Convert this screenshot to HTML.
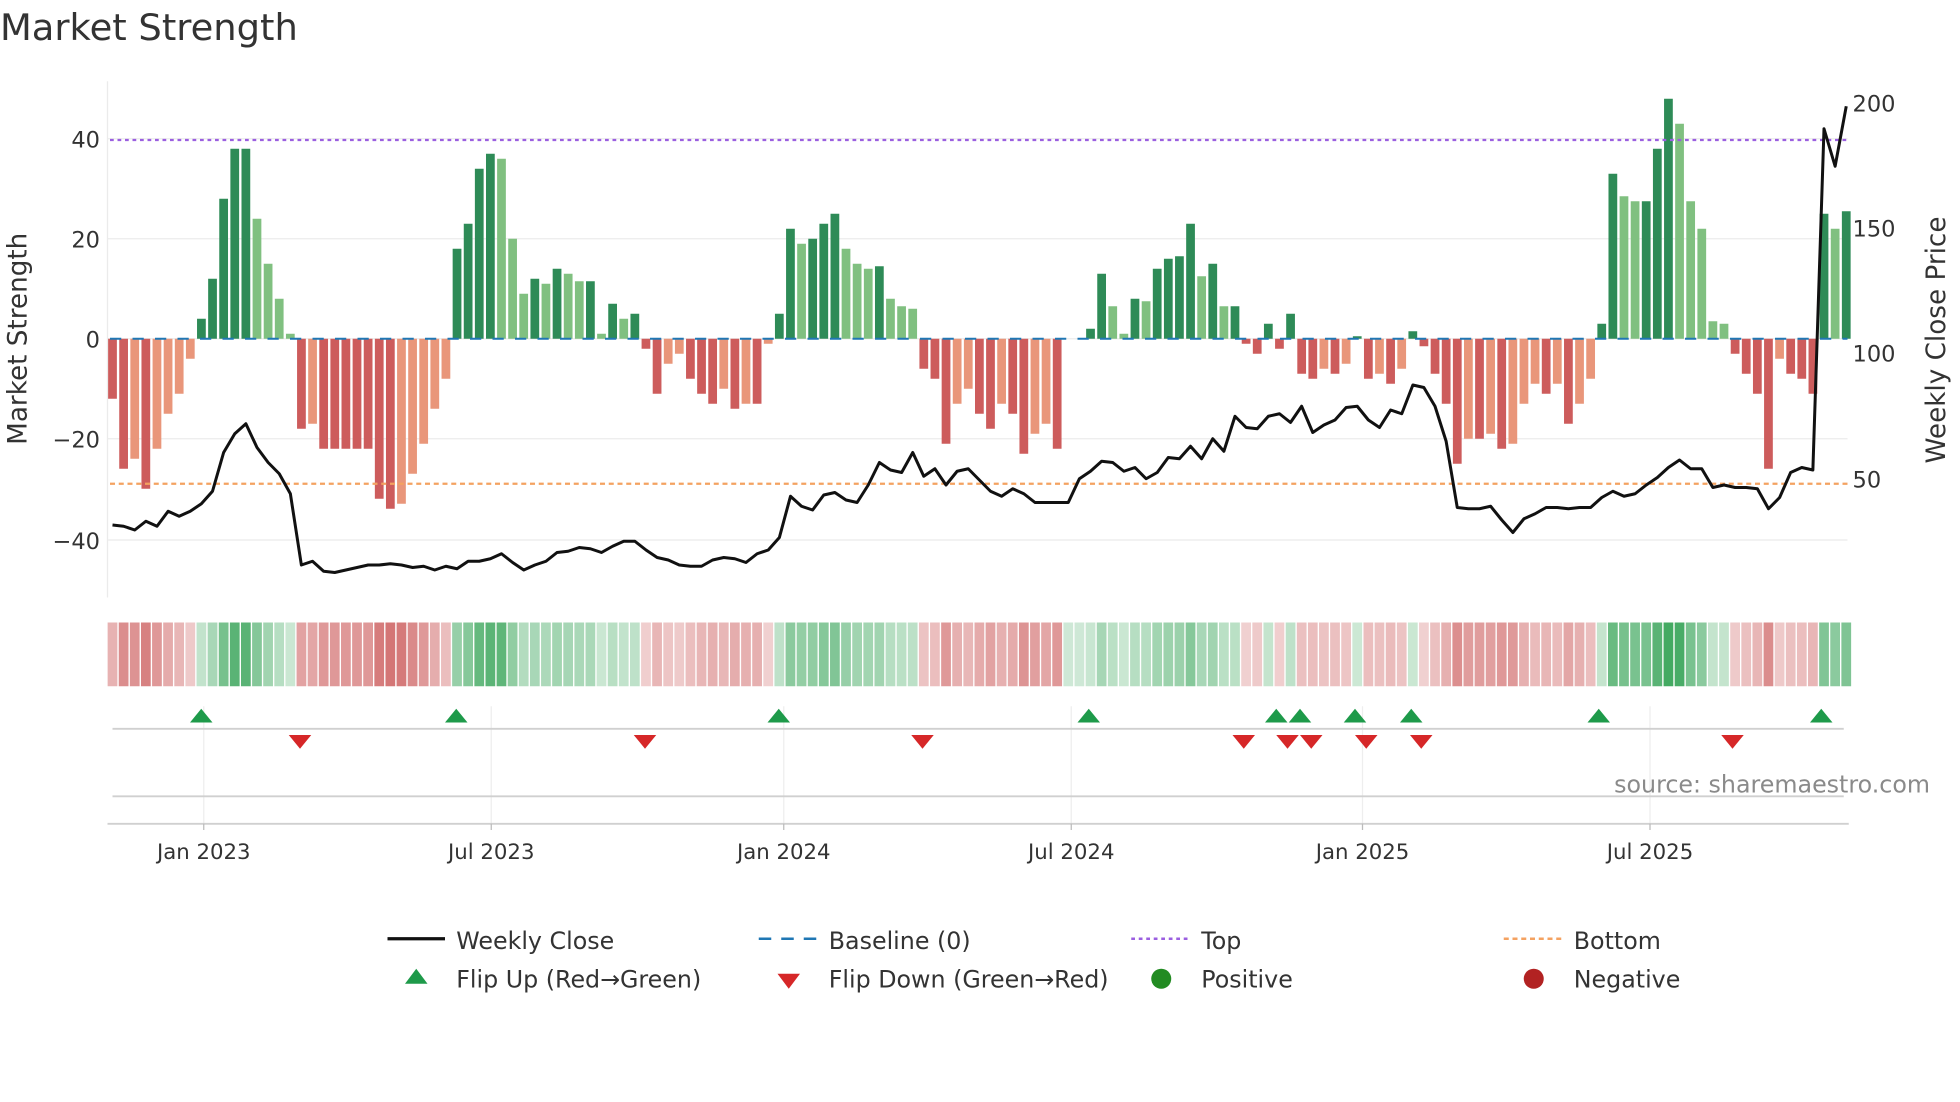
<!DOCTYPE html>
<html><head><meta charset="utf-8"><style>
html,body{margin:0;padding:0;background:#fff;width:1960px;height:1102px;overflow:hidden}
svg{display:block;font-family:"DejaVu Sans","Liberation Sans",sans-serif}
</style></head><body>
<svg id="s" width="1960" height="1102" viewBox="0 0 1568 881.6" xmlns="http://www.w3.org/2000/svg">
<text x="0" y="32" font-size="29.5" fill="#333">Market Strength</text>
<g stroke="#ebebeb" stroke-width="1">
<line x1="86" y1="111" x2="1478" y2="111"/><line x1="86" y1="191" x2="1478" y2="191"/>
<line x1="86" y1="271" x2="1478" y2="271"/><line x1="86" y1="351" x2="1478" y2="351"/>
<line x1="86" y1="432" x2="1478" y2="432"/>
<line x1="86" y1="65" x2="86" y2="478"/>
</g>
<g font-size="18" fill="#333" text-anchor="end">
<text x="80" y="118">40</text><text x="80" y="198">20</text><text x="80" y="278">0</text>
<text x="80" y="358">−20</text><text x="80" y="439">−40</text>
</g>
<g font-size="18" fill="#333">
<text x="1482" y="89">200</text><text x="1482" y="189">150</text><text x="1482" y="289">100</text><text x="1482" y="390">50</text>
</g>
<text transform="translate(21,271) rotate(-90)" font-size="21" fill="#333" text-anchor="middle">Market Strength</text>
<text transform="translate(1556,272) rotate(-90)" font-size="21" fill="#333" text-anchor="middle">Weekly Close Price</text>
<g id="bars"></g>
<line x1="88" y1="271" x2="1478" y2="271" stroke="#1f77b4" stroke-width="1.6" stroke-dasharray="9,9"/>
<line x1="88" y1="112" x2="1478" y2="112" stroke="#9b5fe0" stroke-width="1.8" stroke-dasharray="3,3"/>
<line x1="88" y1="387" x2="1478" y2="387" stroke="#f4a261" stroke-width="1.8" stroke-dasharray="4,3"/>
<polyline id="price" fill="none" stroke="#111" stroke-width="2.4" stroke-linejoin="round"/>
<g id="heat"></g>
<g stroke="#eee" stroke-width="1">
<line x1="163" y1="565" x2="163" y2="659"/><line x1="393" y1="565" x2="393" y2="659"/>
<line x1="627" y1="565" x2="627" y2="659"/><line x1="857" y1="565" x2="857" y2="659"/>
<line x1="1090" y1="565" x2="1090" y2="659"/><line x1="1320" y1="565" x2="1320" y2="659"/>
</g>
<line x1="90" y1="583" x2="1475" y2="583" stroke="#d0d0d0" stroke-width="1.5"/>
<line x1="90" y1="637" x2="1475" y2="637" stroke="#d0d0d0" stroke-width="1.5"/>
<line x1="86" y1="659" x2="1479" y2="659" stroke="#d0d0d0" stroke-width="1.5"/>
<g id="flips"></g>
<text x="1544" y="634" font-size="19" fill="#8a8a8a" text-anchor="end">source: sharemaestro.com</text>
<g stroke="#bbb"><line x1="163" y1="659" x2="163" y2="664"/><line x1="393" y1="659" x2="393" y2="664"/><line x1="627" y1="659" x2="627" y2="664"/><line x1="857" y1="659" x2="857" y2="664"/><line x1="1090" y1="659" x2="1090" y2="664"/><line x1="1320" y1="659" x2="1320" y2="664"/></g>
<g font-size="17" fill="#333" text-anchor="middle">
<text x="163" y="687">Jan 2023</text><text x="393" y="687">Jul 2023</text><text x="627" y="687">Jan 2024</text>
<text x="857" y="687">Jul 2024</text><text x="1090" y="687">Jan 2025</text><text x="1320" y="687">Jul 2025</text>
</g>
<g font-size="19" fill="#333">
<line x1="310" y1="751" x2="356" y2="751" stroke="#111" stroke-width="2.6"/>
<text x="365" y="759">Weekly Close</text>
<line x1="607" y1="751" x2="653" y2="751" stroke="#1f77b4" stroke-width="2" stroke-dasharray="10,8"/>
<text x="663" y="759">Baseline (0)</text>
<line x1="905" y1="751" x2="951" y2="751" stroke="#9b5fe0" stroke-width="2" stroke-dasharray="3,3"/>
<text x="961" y="759">Top</text>
<line x1="1203" y1="751" x2="1249" y2="751" stroke="#f4a261" stroke-width="2" stroke-dasharray="4,3"/>
<text x="1259" y="759">Bottom</text>
<polygon points="333,775 324,787 342,787" fill="#1e9a4a"/>
<text x="365" y="790">Flip Up (Red→Green)</text>
<polygon points="622,779 640,779 631,791" fill="#d62728"/>
<text x="663" y="790">Flip Down (Green→Red)</text>
<circle cx="929" cy="783" r="8" fill="#228b22"/>
<text x="961" y="790">Positive</text>
<circle cx="1227" cy="783" r="8" fill="#b22222"/>
<text x="1259" y="790">Negative</text>
</g>
</svg>
<script>
var v=[-12,-26,-24,-30,-22,-15,-11,-4,4,12,28,38,38,24,15,8,1,-18,-17,-22,-22,-22,-22,-22,-32,-34,-33,-27,-21,-14,-8,18,23,34,37,36,20,9,12,11,14,13,11.5,11.5,1,7,4,5,-2,-11,-5,-3,-8,-11,-13,-10,-14,-13,-13,-1,5,22,19,20,23,25,18,15,14,14.5,8,6.5,6,-6,-8,-21,-13,-10,-15,-18,-13,-15,-23,-19,-17,-22,0,0,2,13,6.5,1,8,7.5,14,16,16.5,23,12.5,15,6.5,6.5,-1,-3,3,-2,5,-7,-8,-6,-7,-5,0.5,-8,-7,-9,-6,1.5,-1.5,-7,-13,-25,-20,-20,-19,-22,-21,-13,-9,-11,-9,-17,-13,-8,3,33,28.5,27.5,27.5,38,48,43,27.5,22,3.5,3,-3,-7,-11,-26,-4,-7,-8,-11,25,22,25.5];
var p=[420,421,424,417,421,409,413,409,403,393,362,347,339,358,370,379,395,452,449,457,458,456,454,452,452,451,452,454,453,456,453,455,449,449,447,443,450,456,452,449,442,441,438,439,442,437,433,433,440,446,448,452,453,453,448,446,447,450,443,440,430,397,405,408,396,394,400,402,388,370,376,378,362,381,375,388,377,375,384,393,397,391,395,402,402,402,402,383,377,369,370,377,374,383,378,366,367,357,367,351,361,333,342,343,333,331,338,325,346,340,336,326,325,336,342,328,331,308,310,325,353,406,407,407,405,416,426,415,411,406,406,407,406,406,398,393,397,395,388,382,374,368,375,375,390,388,390,390,391,407,398,378,374,376,103,133,85];
var n=v.length,x0=90,dx=(1477-90)/(n-1),b='',h='',pts=[];
for(var i=0;i<n;i++){var x=x0+i*dx,val=v[i],pr=i?v[i-1]:0,c;
 if(val>=0)c=(val>=pr)?'#2e8b57':'#80c080';else c=(val<=pr)?'#cd5c5c':'#e9967a';
 var y=271-val*4;
 if(Math.abs(val)>0.3)b+='<rect x="'+(x-3.5)+'" y="'+Math.min(y,271)+'" width="7" height="'+Math.abs(val*4)+'" fill="'+c+'"/>';
 var a=0.25+Math.min(Math.abs(val),45)/45*0.7;
 h+='<rect x="'+(x-3.9)+'" y="498" width="7.8" height="51" fill="'+(val>=0?'#3aa55a':'#c85050')+'" fill-opacity="'+a.toFixed(2)+'"/>';
 pts.push(x.toFixed(1)+','+p[i]);}
document.getElementById('bars').innerHTML=b;
document.getElementById('heat').innerHTML=h;
document.getElementById('price').setAttribute('points',pts.join(' '));
var up=[161,365,623,871,1021,1040,1084,1129,1279,1457],dn=[240,516,738,995,1030,1049,1093,1137,1386],f='';
up.forEach(function(x){f+='<polygon points="'+x+',567 '+(x-9)+',578 '+(x+9)+',578" fill="#1e9a4a"/>';});
dn.forEach(function(x){f+='<polygon points="'+(x-9)+',588 '+(x+9)+',588 '+x+',599" fill="#d62728"/>';});
document.getElementById('flips').innerHTML=f;
</script>
</body></html>
